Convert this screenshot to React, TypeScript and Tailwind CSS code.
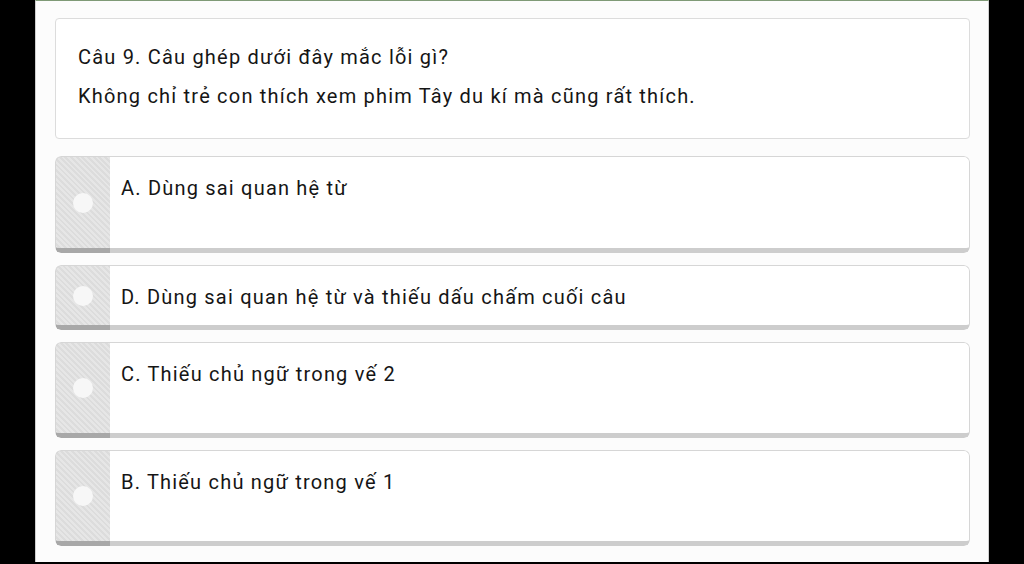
import React from "react";

const options = [
  { label: "A. Dùng sai quan hệ từ", h: "h-[97px]" },
  { label: "D. Dùng sai quan hệ từ và thiếu dấu chấm cuối câu", h: "h-[65px]" },
  { label: "C. Thiếu chủ ngữ trong vế 2", h: "h-[96px]" },
  { label: "B. Thiếu chủ ngữ trong vế 1", h: "h-[96px]" },
];

function Option({ label, h }: { label: string; h: string }) {
  return (
    <div className="flex w-[915px] rounded-[6px] overflow-hidden">
      <div className="w-[55px] shrink-0 flex items-center justify-center rounded-l-[6px] border-t border-l border-[#d6d6d6] border-b-[5px] border-b-[#a8a8a8] bg-[repeating-linear-gradient(45deg,#e6e6e6_0px,#e6e6e6_2px,#dcdcdc_2px,#dcdcdc_4px)]">
        <div className="w-[20px] h-[20px] rounded-full bg-[#f7f7f7]" />
      </div>
      <div
        className={
          "flex-1 bg-white border-t border-r border-[#d6d6d6] border-b-[5px] border-b-[#cdcdcd] rounded-r-[6px] pl-[11px] pt-[17px] text-[20px] tracking-[1.2px] leading-[28px] text-[#151515] " +
          h
        }
      >
        {label}
      </div>
    </div>
  );
}

export default function App() {
  return (
    <div
      className="w-[1024px] h-[564px] bg-black flex overflow-hidden"
      style={{ fontFamily: "Roboto, 'Noto Sans', sans-serif" }}
    >
      <div className="ml-[35px] w-[954px] h-[562px] bg-[#fcfcfc] border-l border-r border-[#cfcfcf] border-t border-t-[#7f9a76] pl-[19px] pt-[17px] flex flex-col">
        <div className="w-[915px] h-[121px] bg-white border border-[#dcdcdc] rounded-[4px] pl-[22px] pt-[19px] text-[20px] tracking-[1.2px] leading-[39px] text-[#151515]">
          <div>Câu 9. Câu ghép dưới đây mắc lỗi gì?</div>
          <div>Không chỉ trẻ con thích xem phim Tây du kí mà cũng rất thích.</div>
        </div>
        <div className="mt-[17px] flex flex-col gap-[12px]">
          {options.map((o) => (
            <Option key={o.label} label={o.label} h={o.h} />
          ))}
        </div>
      </div>
    </div>
  );
}
